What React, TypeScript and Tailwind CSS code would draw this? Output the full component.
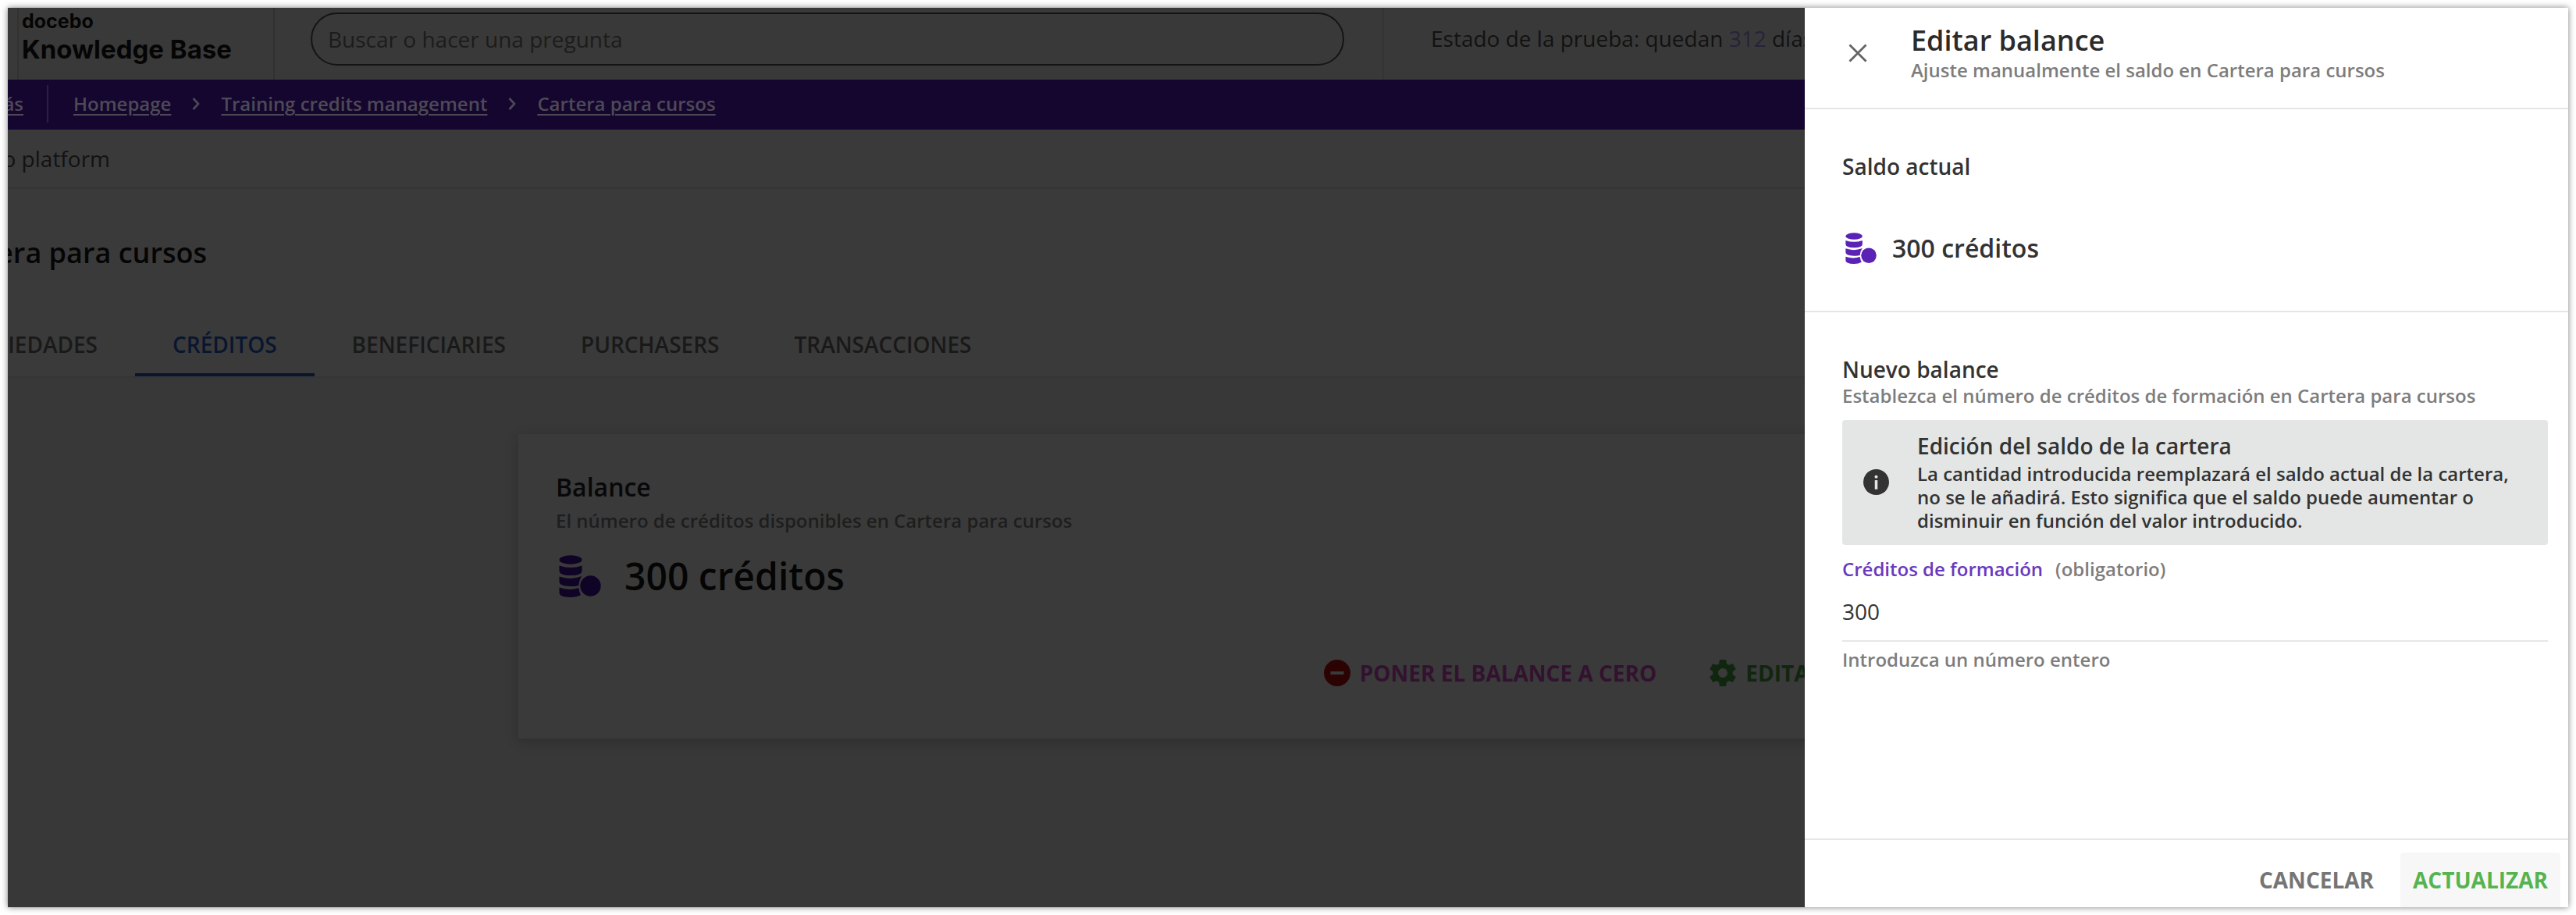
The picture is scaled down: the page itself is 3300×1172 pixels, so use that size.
import type { ReactNode } from "react";

function CoinsIcon({ className }: { className: string }) {
  return (
    <svg viewBox="0 0 54 54" className={className} fill="currentColor" aria-hidden="true">
      <ellipse cx="15" cy="6" rx="14.5" ry="5.8" />
      <path d="M0.5 13.5 Q15 18.5 29.5 13.5 V20 Q29.5 26 15 26 Q0.5 26 0.5 20 Z" />
      <path d="M0.5 27.5 Q15 32.5 29.5 27 Q26 31 25.3 39 Q21 40.3 15 40 Q0.5 39.6 0.5 34 Z" />
      <path d="M0.5 41.5 Q13 46 25.3 42 Q26 47.5 28 51 Q23 54 15 54 Q0.5 54 0.5 48 Z" />
      <ellipse cx="40.5" cy="39.5" rx="13.2" ry="13.2" />
    </svg>
  );
}

function MinusIcon({ className }: { className: string }) {
  return (
    <svg viewBox="0 0 34 34" className={className} aria-hidden="true">
      <circle cx="17" cy="17" r="17" fill="#2b0303" />
      <rect x="8.5" y="15" width="17" height="4" fill="#3a3a3a" />
    </svg>
  );
}

function GearIcon({ className }: { className: string }) {
  return (
    <svg viewBox="2 2 20 20" className={className} fill="currentColor" aria-hidden="true">
      <path d="M19.43 12.98c.04-.32.07-.64.07-.98s-.03-.66-.07-.98l2.11-1.65c.19-.15.24-.42.12-.64l-2-3.46c-.12-.22-.39-.3-.61-.22l-2.49 1c-.52-.4-1.08-.73-1.69-.98l-.38-2.65C14.46 2.18 14.25 2 14 2h-4c-.25 0-.46.18-.49.42l-.38 2.65c-.61.25-1.17.59-1.69.98l-2.49-1c-.23-.09-.49 0-.61.22l-2 3.46c-.13.22-.07.49.12.64l2.11 1.65c-.04.32-.07.65-.07.98s.03.66.07.98l-2.11 1.65c-.19.15-.24.42-.12.64l2 3.46c.12.22.39.3.61.22l2.49-1c.52.4 1.08.73 1.69.98l.38 2.65c.03.24.24.42.49.42h4c.25 0 .46-.18.49-.42l.38-2.65c.61-.25 1.17-.59 1.69-.98l2.49 1c.23.09.49 0 .61-.22l2-3.46c.12-.22.07-.49-.12-.64l-2.11-1.65zM12 15.5c-1.93 0-3.5-1.57-3.5-3.5s1.57-3.5 3.5-3.5 3.5 1.57 3.5 3.5-1.57 3.5-3.5 3.5z" />
    </svg>
  );
}

function InfoIcon({ className }: { className: string }) {
  return (
    <svg viewBox="0 0 34 34" className={className} aria-hidden="true">
      <circle cx="17" cy="17" r="17" fill="#333333" />
      <circle cx="17" cy="10" r="2.1" fill="#e4e6e5" />
      <rect x="15.2" y="14.5" width="3.6" height="12" fill="#e4e6e5" />
    </svg>
  );
}

function Chevron() {
  return (
    <svg viewBox="0 0 10 16" className="h-4 w-2.5" fill="none" stroke="#4d4a55" strokeWidth="2.6" aria-hidden="true">
      <path d="M1.5 1 L8 8 L1.5 15" />
    </svg>
  );
}

function Crumb({ children }: { children: ReactNode }) {
  return (
    <a href="#" className="whitespace-nowrap underline decoration-2 underline-offset-4">
      {children}
    </a>
  );
}

function Tab({ children, active = false }: { children: ReactNode; active?: boolean }) {
  return (
    <button
      type="button"
      role="tab"
      aria-selected={active}
      className={
        active
          ? "border-b-4 border-[#08162e] px-12 pb-[17px] text-[#08162e]"
          : "border-b-4 border-transparent px-12 pb-[17px] text-[#191919]"
      }
    >
      {children}
    </button>
  );
}

function KnowledgePage() {
  return (
    <div className="flex min-w-0 flex-1 flex-col bg-[#3a3a3a] text-[28px] leading-10 text-[#121212]">
      <header className="flex h-[92px] items-stretch bg-[#393939]">
        <div className="ml-3 w-[330px] border-x-2 border-[#313131] pl-1 font-['Inter',sans-serif] font-bold text-[#050505]">
          <div className="text-[25px] leading-[34px]">docebo</div>
          <div className="text-[33px] leading-[38px] whitespace-nowrap">Knowledge Base</div>
        </div>
        <div className="pt-1.5 pl-[46px]">
          <input
            type="search"
            aria-label="Buscar o hacer una pregunta"
            placeholder="Buscar o hacer una pregunta"
            className="h-[68px] w-[1324px] rounded-full border-2 border-[#141416] bg-transparent px-5 placeholder:text-[#1c1c1c]"
          />
        </div>
        <div className="ml-[49px] border-l-2 border-[#343434] pt-[19px] pl-[60px] whitespace-nowrap">
          Estado de la prueba: quedan <a href="#" className="text-[#282238]">312</a> días
        </div>
      </header>

      <nav className="flex h-16 items-center bg-[#150630] pb-0.5 text-2xl font-semibold text-[#4d4a55]">
        <div className="flex w-5 justify-end overflow-hidden">
          <Crumb>Atrás</Crumb>
        </div>
        <div className="mr-8 ml-[30px] h-12 w-0.5 bg-[#2b2040]" />
        <div className="flex items-center gap-[27px]">
          <Crumb>Homepage</Crumb>
          <Chevron />
          <Crumb>Training credits management</Crumb>
          <Chevron />
          <Crumb>Cartera para cursos</Crumb>
        </div>
      </nav>

      <div className="flex h-19 items-center border-b-2 border-[#353535]">
        <div className="flex w-[131px] justify-end overflow-hidden whitespace-nowrap">docebo platform</div>
      </div>

      <div className="flex w-[255px] justify-end overflow-hidden pt-[58px] text-4xl leading-[48px] font-semibold text-[#050505]">
        <h1 className="whitespace-nowrap">Cartera para cursos</h1>
      </div>

      <div role="tablist" className="flex pt-[73px] font-semibold">
        <div className="flex w-[163px] justify-end overflow-hidden">
          <Tab>PROPIEDADES</Tab>
        </div>
        <Tab active>CRÉDITOS</Tab>
        <Tab>BENEFICIARIES</Tab>
        <Tab>PURCHASERS</Tab>
        <Tab>TRANSACCIONES</Tab>
      </div>

      <main className="flex-1 border-t-2 border-[#353535] bg-[#383838] pt-[72px] pr-[906px] pl-[654px]">
        <section className="bg-[#3a3a3a] px-12 pt-[46px] pb-16 shadow-[0_4px_16px_rgba(0,0,0,0.2)]">
          <h2 className="text-[32px] leading-[44px] font-semibold text-[#080808]">Balance</h2>
          <p className="mt-[5px] text-2xl leading-8 font-semibold text-[#1e1e1e]">
            El número de créditos disponibles en Cartera para cursos
          </p>
          <div className="mt-[23px] flex items-center text-5xl leading-[64px] font-semibold text-[#050505]">
            <CoinsIcon className="ml-1 mr-[30px] h-[54px] w-[54px] text-[#0f0326]" />
            300 créditos
          </div>
          <div className="mt-[72px] flex justify-end gap-[68px] font-bold whitespace-nowrap">
            <button type="button" className="flex items-center gap-3 text-[#32122f]">
              <MinusIcon className="h-[34px] w-[34px]" />
              PONER EL BALANCE A CERO
            </button>
            <button type="button" className="flex items-center gap-3 text-[#10260f]">
              <GearIcon className="h-[34px] w-[34px]" />
              EDITAR
            </button>
          </div>
        </section>
      </main>
    </div>
  );
}

function EditBalanceDrawer() {
  return (
    <aside className="absolute inset-y-0 right-0 flex w-[978px] flex-col bg-white text-[28px] leading-9 text-[#333333]">
      <header className="flex h-[130px] border-b-2 border-[#e6e6e6] pl-14">
        <button type="button" aria-label="Cerrar" className="mt-[46px] h-6 w-6 self-start">
          <svg viewBox="0 0 24 24" className="h-6 w-6" stroke="#636363" strokeWidth="2.8" aria-hidden="true">
            <path d="M1.5 1.5 L22.5 22.5 M22.5 1.5 L1.5 22.5" />
          </svg>
        </button>
        <div className="pt-5 pl-14">
          <h2 className="text-4xl leading-[44px] font-semibold text-[#2b2b2b]">Editar balance</h2>
          <p className="text-2xl leading-8 font-semibold text-[#7d7d7d]">
            Ajuste manualmente el saldo en Cartera para cursos
          </p>
        </div>
      </header>

      <section className="border-b-2 border-[#e6e6e6] px-12 pt-[55px] pb-[58px]">
        <h3 className="font-semibold">Saldo actual</h3>
        <div className="mt-[65px] flex items-center gap-5 text-[32px] leading-[44px] font-semibold">
          <CoinsIcon className="ml-1 h-10 w-10 text-[#5a22b5]" />
          300 créditos
        </div>
      </section>

      <section className="flex-1 pt-[55px] pr-[26px] pl-12">
        <h3 className="font-semibold">Nuevo balance</h3>
        <p className="text-2xl leading-8 font-semibold text-[#7d7d7d]">
          Establezca el número de créditos de formación en Cartera para cursos
        </p>
        <div className="mt-[15px] flex items-center rounded-sm bg-[#e4e6e5] pt-[15px] pr-10 pb-4 pl-[27px]">
          <InfoIcon className="mr-9 h-[33px] w-[33px] shrink-0" />
          <div>
            <h4 className="font-semibold">Edición del saldo de la cartera</h4>
            <p className="mt-[3px] text-2xl leading-[30px] font-semibold">
              La cantidad introducida reemplazará el saldo actual de la cartera, no se le añadirá. Esto significa que
              el saldo puede aumentar o disminuir en función del valor introducido.
            </p>
          </div>
        </div>
        <label htmlFor="credits" className="mt-[15px] flex gap-4 text-2xl leading-8 font-semibold text-[#6a38bf]">
          <span>Créditos de formación</span>
          <span className="text-[#7d7d7d]">(obligatorio)</span>
        </label>
        <input
          id="credits"
          type="text"
          inputMode="numeric"
          defaultValue="300"
          className="block h-[77px] w-full border-b-2 border-[#e6e6e6]"
        />
        <p className="mt-[7px] text-2xl leading-8 font-semibold text-[#7d7d7d]">Introduzca un número entero</p>
      </section>

      <footer className="flex justify-end gap-[18px] border-t-2 border-[#e6e6e6] pt-4 pr-2.5 font-bold">
        <button type="button" className="h-[70px] px-4 text-[#757575]">
          CANCELAR
        </button>
        <button type="button" className="h-[70px] rounded-t-sm bg-[#f7f7f7] px-4 text-[#55b450]">
          ACTUALIZAR
        </button>
      </footer>
    </aside>
  );
}

export default function App() {
  return (
    <div className="flex min-h-screen bg-white p-2.5 font-['Open_Sans',sans-serif]">
      <div className="relative flex flex-1 overflow-hidden shadow-[0_0_8px_rgba(0,0,0,0.5)]">
        <KnowledgePage />
        <EditBalanceDrawer />
      </div>
    </div>
  );
}
